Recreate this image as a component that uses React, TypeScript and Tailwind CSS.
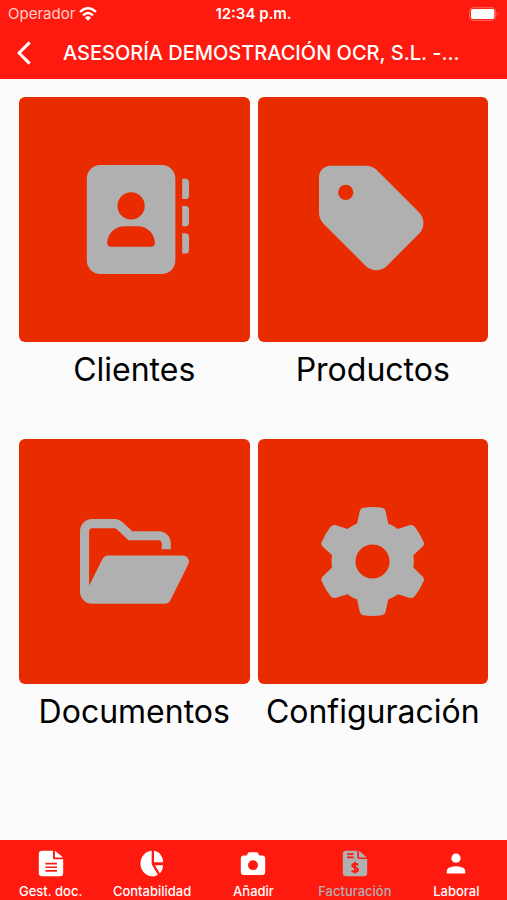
import React, { useState } from 'react';

const AddressBookIcon = () => (
  <svg viewBox="0 0 512 512" className="w-[109px]" fill="currentColor" aria-hidden="true">
    <path
      fillRule="evenodd"
      d="M96 0C60.7 0 32 28.7 32 64V448c0 35.3 28.7 64 64 64H384c35.3 0 64-28.7 64-64V64c0-35.3-28.7-64-64-64H96zM208 288h64c44.2 0 80 35.8 80 80c0 8.8-7.2 16-16 16H144c-8.8 0-16-7.2-16-16c0-44.2 35.8-80 80-80zm-32-96a64 64 0 1 1 128 0 64 64 0 1 1-128 0z"
    />
    <path d="M480 64h16c8.8 0 16 7.2 16 16v64c0 8.8-7.2 16-16 16h-16zM480 192h16c8.8 0 16 7.2 16 16v64c0 8.8-7.2 16-16 16h-16zM480 320h16c8.8 0 16 7.2 16 16v64c0 8.8-7.2 16-16 16h-16z" />
  </svg>
);

const TagIcon = () => (
  <svg viewBox="0 0 448 512" className="w-[107px]" fill="currentColor" aria-hidden="true">
    <path
      fillRule="evenodd"
      d="M0 80V229.5c0 17 6.7 33.3 18.7 45.3l176 176c25 25 65.5 25 90.5 0L418.7 317.3c25-25 25-65.5 0-90.5l-176-176c-12-12-28.3-18.7-45.3-18.7H48C21.5 32 0 53.5 0 80zm112 32a32 32 0 1 1 0 64 32 32 0 1 1 0-64z"
    />
  </svg>
);

const FolderIcon = () => (
  <svg viewBox="0 0 576 512" className="w-[109px]" fill="currentColor" aria-hidden="true">
    <path d="M572.6 270.3l-96 192C471.2 473.2 460.1 480 447.1 480H64c-35.35 0-64-28.66-64-64V96c0-35.34 28.65-64 64-64h117.5c16.97 0 33.25 6.742 45.26 18.75L275.9 96H416c35.35 0 64 28.66 64 64v32h-48V160c0-8.824-7.178-16-16-16H256L192.8 84.69C189.8 81.66 185.8 80 181.5 80H64C55.18 80 48 87.18 48 96v288l71.16-142.3C124.6 230.8 135.7 224 147.8 224h396.2C567.7 224 583.2 249 572.6 270.3z" />
  </svg>
);

const GearIcon = () => (
  <svg viewBox="56 37 326 326" className="w-[109px]" fill="currentColor" aria-hidden="true">
    <path
      fillRule="evenodd"
      d="M192 39Q219 35 247 39Q256 41 258 49L266 86Q282 92 295 103L331 91Q340 89 346 97Q362 118 372 142Q375 149 369 155L341 181Q344 200 341 218L369 245Q375 251 372 258Q362 282 346 303Q340 311 331 309L295 298Q282 308 266 314L258 351Q256 359 247 361Q219 365 192 361Q183 359 181 351L173 314Q157 308 144 298L108 309Q99 311 93 303Q77 282 67 258Q64 251 70 245L98 218Q95 200 98 181L70 155Q64 149 67 142Q77 118 93 97Q99 89 108 91L144 103Q157 92 173 86L181 49Q183 41 192 39ZM168 200a51 51 0 1 0 102 0a51 51 0 1 0-102 0z"
    />
  </svg>
);

const FileIcon = () => (
  <svg viewBox="115 58 78 82" className="h-[27px] w-[26px]" fill="currentColor" aria-hidden="true">
    <path
      fillRule="evenodd"
      d="M127 60h33v23q0 3 3 3h28v42q0 10-10 10h-54q-10 0-10-10V70q0-10 10-10zM137 97v5h35v-5zM137 108v5h35v-5zM137 119v5h35v-5z"
    />
    <path d="M166 60l25 21h-25z" />
  </svg>
);

const PieIcon = () => (
  <svg viewBox="421 58 78 82" className="h-[27px] w-[26px]" fill="currentColor" aria-hidden="true">
    <path d="M459 60v41l19 32Q470 139 460 138C439 137 425 119 425 99S439 62 459 60z" />
    <path d="M466 60C482 62 493 77 494 95h-28zM469 104h25q-1 15-10 25z" />
  </svg>
);

const CameraIcon = () => (
  <svg viewBox="0 0 78 82" className="h-[27px] w-[26px]" fill="currentColor" aria-hidden="true">
    <path
      fillRule="evenodd"
      d="M28 7h22q4 0 5 4l3 6h9q9 0 9 9v41q0 9-9 9H11q-9 0-9-9V26q0-9 9-9h9l3-6q1-4 5-4zM24 46a15 15 0 1 0 30 0a15 15 0 1 0-30 0z"
    />
  </svg>
);

const InvoiceIcon = () => (
  <svg viewBox="265 58 78 82" className="h-[27px] w-[26px]" fill="currentColor" aria-hidden="true">
    <path
      fillRule="evenodd"
      d="M277 60h34v20q0 5 5 5h25v43q0 10-10 10h-54q-10 0-10-10V70q0-10 10-10zM280 68v5h20v-5zM280 78v5h20v-5z"
    />
    <path d="M316 60l24 21h-24z" />
    <path
      d="M314 103q-5-3-10-3q-8 0-8 5q0 4 8 6q9 2 9 7q0 6-9 6q-6 0-10-3M304 94v35"
      fill="none"
      stroke="#ff1a10"
      strokeWidth="6"
    />
  </svg>
);

const PersonIcon = () => (
  <svg viewBox="570 58 78 82" className="h-[27px] w-[26px]" fill="currentColor" aria-hidden="true">
    <circle cx="609" cy="83" r="14" />
    <path d="M581 129v-7q0-8 9-11q19-7 38 0q9 3 9 11v7z" />
  </svg>
);

const sections = [
  { label: 'Clientes', icon: <AddressBookIcon /> },
  { label: 'Productos', icon: <TagIcon /> },
  { label: 'Documentos', icon: <FolderIcon /> },
  { label: 'Configuración', icon: <GearIcon /> },
];

const tabs = [
  { label: 'Gest. doc.', icon: <FileIcon /> },
  { label: 'Contabilidad', icon: <PieIcon /> },
  { label: 'Añadir', icon: <CameraIcon /> },
  { label: 'Facturación', icon: <InvoiceIcon /> },
  { label: 'Laboral', icon: <PersonIcon /> },
];

const App: React.FC = () => {
  const [activeTab, setActiveTab] = useState('Facturación');

  return (
    <div className="flex min-h-screen flex-col bg-[#fbfbfb] font-[Inter,sans-serif] text-black">
      <header className="bg-[#ff1a10] text-white">
        <div className="grid h-7 grid-cols-3 items-center px-2 text-[15px]">
          <div className="flex items-center gap-1 text-[#ffd0cc]">
            <span>Operador</span>
            <svg viewBox="0 0 54 42" className="h-[14px] w-[18px] text-white" aria-hidden="true">
              <g fill="none" stroke="currentColor" strokeWidth="7">
                <path d="M3 15Q27-7 51 15M12 25Q27 11 42 25" />
              </g>
              <path d="M18 32q9-8 18 0l-9 9z" fill="currentColor" />
            </svg>
          </div>
          <span className="text-center font-semibold">12:34 p.m.</span>
          <svg viewBox="0 0 90 42" className="h-[14px] w-[30px] justify-self-end" aria-hidden="true">
            <rect x="2" y="2" width="78" height="38" rx="11" fill="none" stroke="#ff6a62" strokeWidth="3" />
            <rect x="6" y="6" width="70" height="30" rx="6" fill="#fff" />
            <path d="M84 15q6 6 0 12z" fill="#ff6a62" />
          </svg>
        </div>
        <div className="flex h-[51px] items-center pb-[2px]">
          <button type="button" aria-label="Volver" className="flex w-[47px] justify-center">
            <svg viewBox="0 0 42 72" className="h-6 w-[14px]" aria-hidden="true">
              <path d="M38 4L6 36l32 32" fill="none" stroke="currentColor" strokeWidth="9" />
            </svg>
          </button>
          <h1 className="flex-1 truncate px-4 text-xl font-medium">ASESORÍA DEMOSTRACIÓN OCR, S.L. -...</h1>
        </div>
      </header>

      <main className="grid flex-1 grid-cols-2 content-start gap-x-2 gap-y-[42px] px-[19px] pt-[18px]">
        {sections.map((section) => (
          <button key={section.label} type="button" className="flex flex-col text-center">
            <span className="flex h-[245px] w-full items-center justify-center rounded-md bg-[#e92c00] text-[#b0b0b0]">
              {section.icon}
            </span>
            <span className="w-full text-[32px] leading-[55px]">{section.label}</span>
          </button>
        ))}
      </main>

      <nav className="grid h-[60px] grid-cols-5 bg-[#ff1a10]">
        {tabs.map((tab) => (
          <button
            key={tab.label}
            type="button"
            onClick={() => setActiveTab(tab.label)}
            className={`flex flex-col items-center gap-1 pt-[10px] text-[13px] leading-5 font-medium ${
              activeTab === tab.label ? 'text-[#b0b0b0]' : 'text-white'
            }`}
          >
            {tab.icon}
            <span>{tab.label}</span>
          </button>
        ))}
      </nav>
    </div>
  );
};

export default App;
